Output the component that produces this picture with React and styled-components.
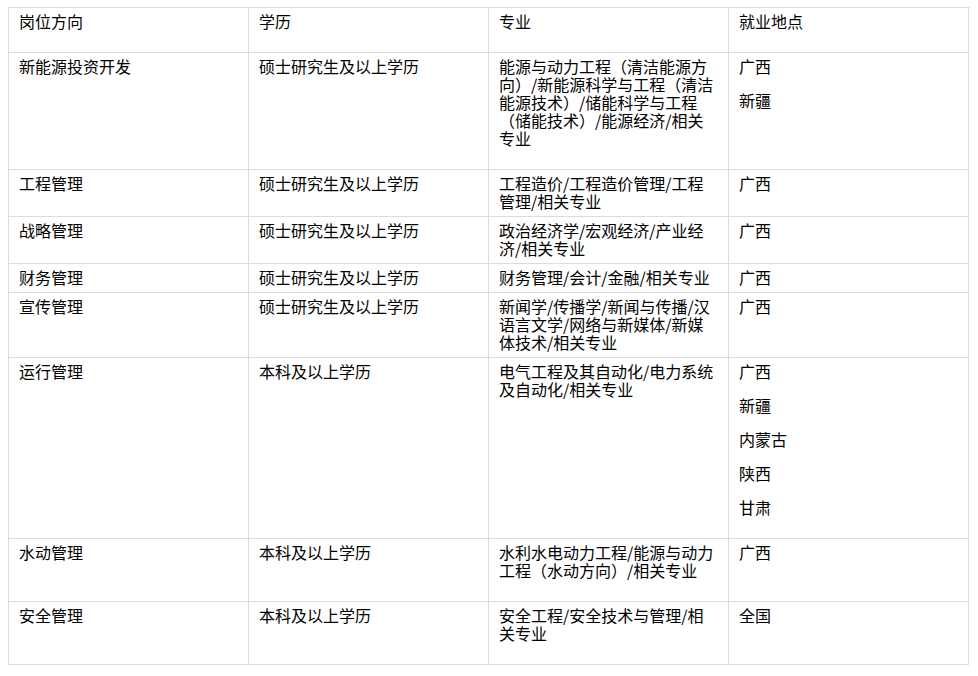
import styled, { createGlobalStyle } from "styled-components"

const GlobalStyle = createGlobalStyle`
  body {
    margin: 7px 8px 8px;
    background: #fff;
    font-family: "Noto Sans CJK SC", "Liberation Sans", sans-serif;
    color: #000;
  }
`

const Table = styled.div`
  width: 961px;
  border-top: 1px solid #dcdcdc;
  border-left: 1px solid #dcdcdc;
  font-size: 16px;
  line-height: 18px;
`

const Row = styled.div`
  display: grid;
  grid-template-columns: repeat(4, 240px);
`

const Cell = styled.div`
  border-right: 1px solid #dcdcdc;
  border-bottom: 1px solid #dcdcdc;
  padding: 4px 10px ${props => 6 + (props.extra || 0)}px;
  word-break: break-all;
`

const Places = styled.div`
  display: flex;
  flex-direction: column;
  gap: 16px;
`

const rows = [
    {post: "岗位方向", edu: "学历", major: "专业", places: ["就业地点"], extra: 16},
    {
        post: "新能源投资开发",
        edu: "硕士研究生及以上学历",
        major: "能源与动力工程（清洁能源方向）/新能源科学与工程（清洁能源技术）/储能科学与工程（储能技术）/能源经济/相关专业",
        places: ["广西", "新疆"],
        extra: 16
    },
    {post: "工程管理", edu: "硕士研究生及以上学历", major: "工程造价/工程造价管理/工程管理/相关专业", places: ["广西"]},
    {post: "战略管理", edu: "硕士研究生及以上学历", major: "政治经济学/宏观经济/产业经济/相关专业", places: ["广西"]},
    {post: "财务管理", edu: "硕士研究生及以上学历", major: "财务管理/会计/金融/相关专业", places: ["广西"]},
    {post: "宣传管理", edu: "硕士研究生及以上学历", major: "新闻学/传播学/新闻与传播/汉语言文学/网络与新媒体/新媒体技术/相关专业", places: ["广西"]},
    {
        post: "运行管理",
        edu: "本科及以上学历",
        major: "电气工程及其自动化/电力系统及自动化/相关专业",
        places: ["广西", "新疆", "内蒙古", "陕西", "甘肃"],
        extra: 16
    },
    {post: "水动管理", edu: "本科及以上学历", major: "水利水电动力工程/能源与动力工程（水动方向）/相关专业", places: ["广西"], extra: 16},
    {post: "安全管理", edu: "本科及以上学历", major: "安全工程/安全技术与管理/相关专业", places: ["全国"], extra: 16},
]

const App = () => {
    return (
        <>
            <GlobalStyle/>
            <Table>
                {rows.map((r, i) => (
                    <Row key={i}>
                        <Cell extra={r.extra}>{r.post}</Cell>
                        <Cell extra={r.extra}>{r.edu}</Cell>
                        <Cell extra={r.extra}>{r.major}</Cell>
                        <Cell extra={r.extra}>
                            <Places>
                                {r.places.map(p => <span key={p}>{p}</span>)}
                            </Places>
                        </Cell>
                    </Row>
                ))}
            </Table>
        </>
    )
}

export default App
